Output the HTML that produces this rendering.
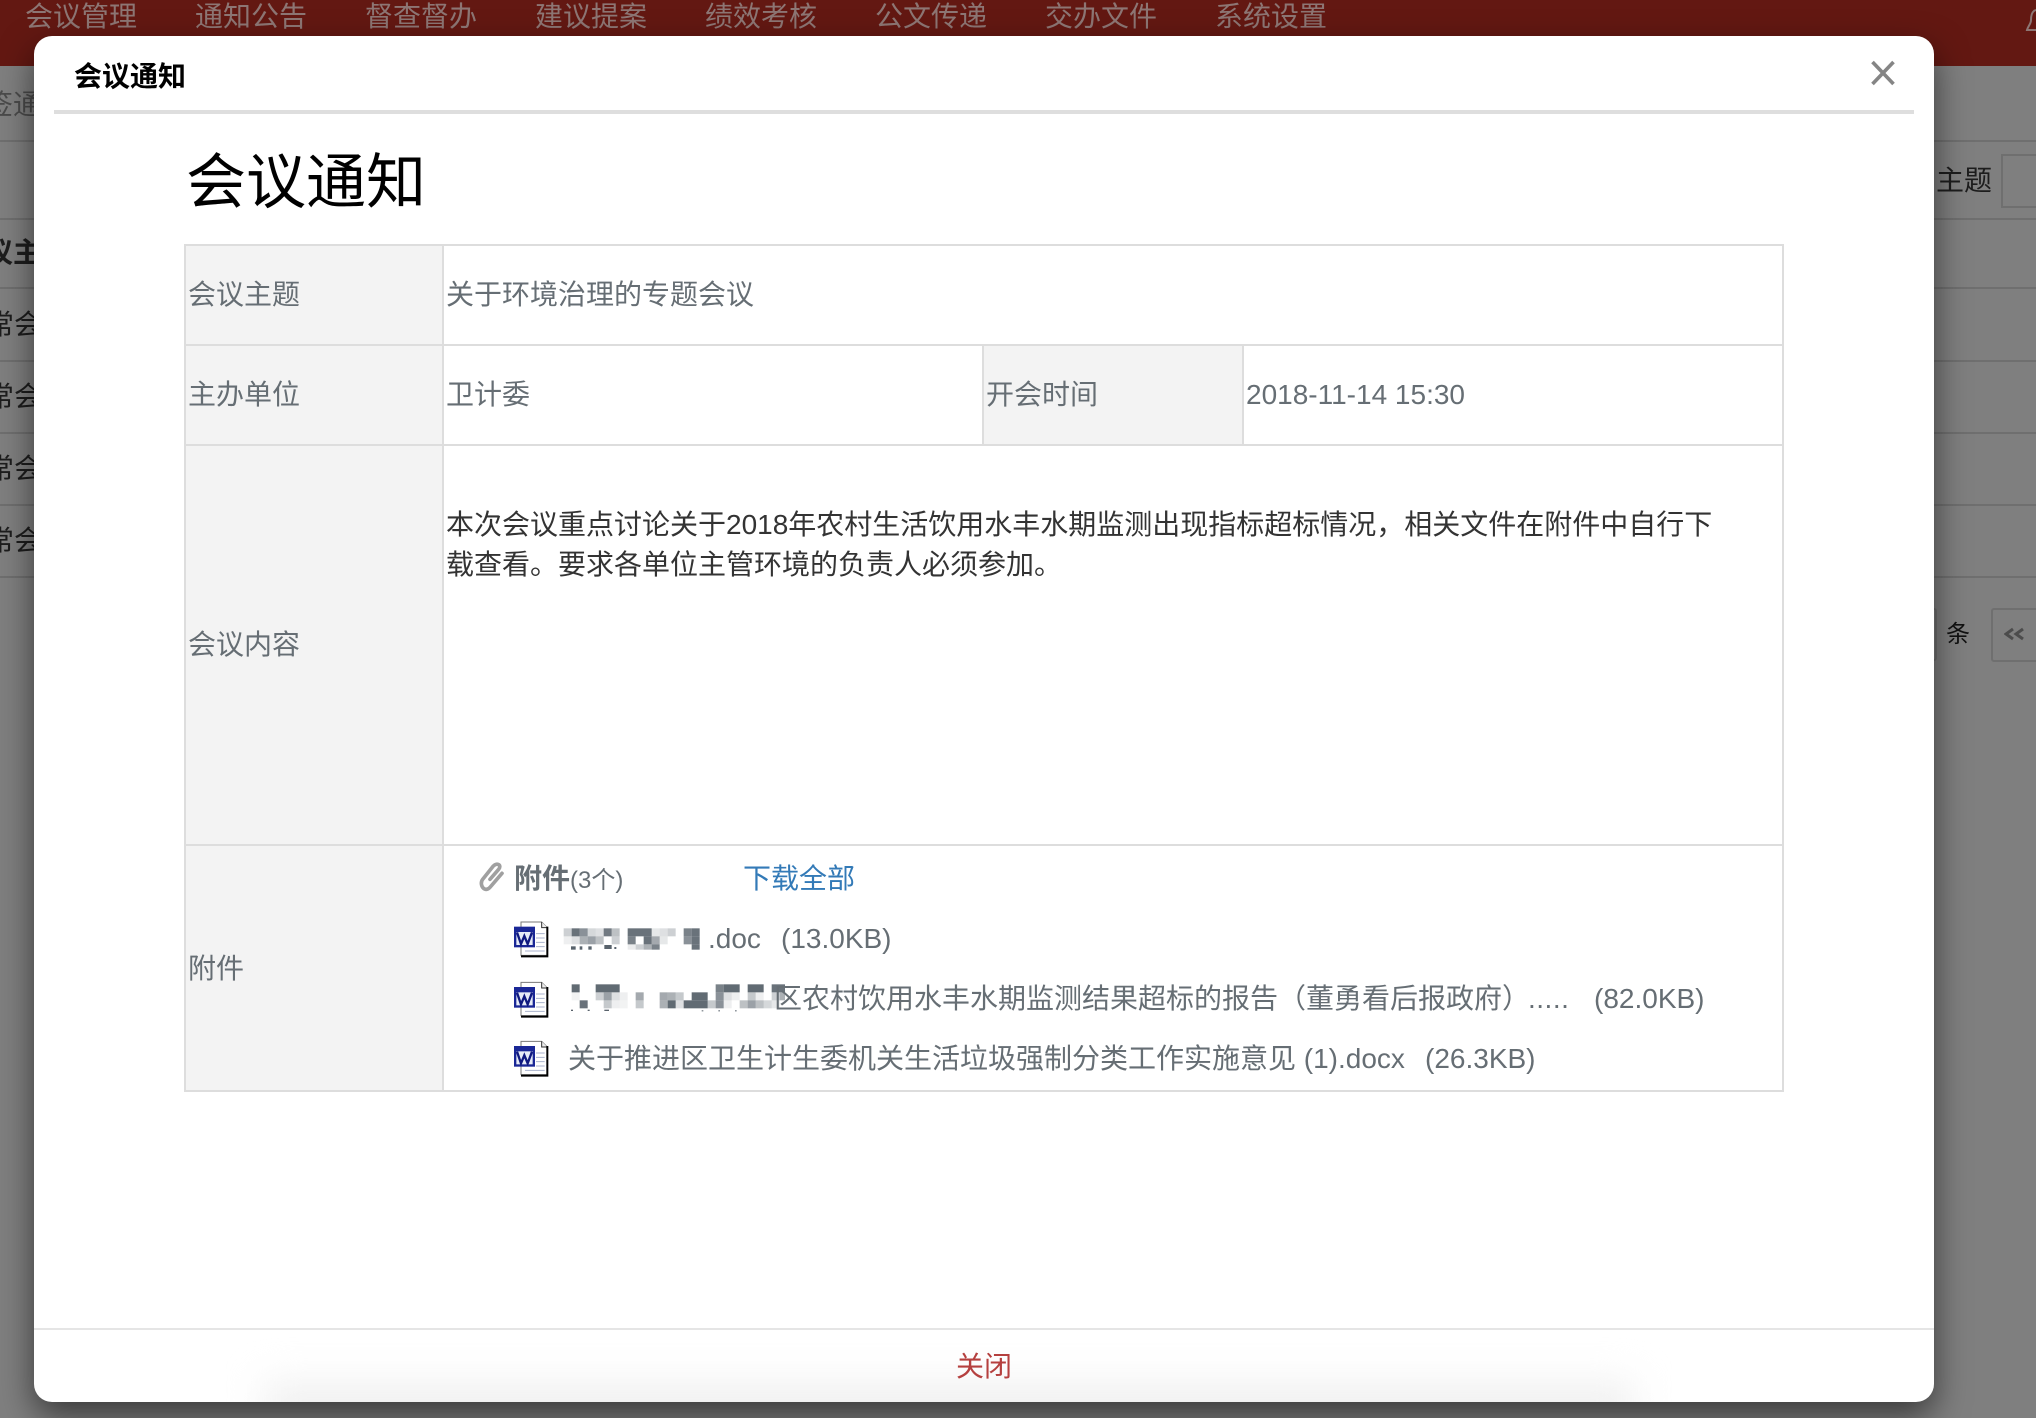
<!DOCTYPE html>
<html lang="zh"><head><meta charset="utf-8"><title>会议通知</title>
<style>
html,body{margin:0;padding:0}
body{width:2036px;height:1418px;position:relative;overflow:hidden;background:#7f7f7f;font-family:"Liberation Sans","Noto Sans CJK SC",sans-serif;font-size:28px;color:#666e74}
.t{position:absolute;white-space:nowrap;line-height:40px;height:40px}
.b{position:absolute}
.nav{position:absolute;left:0;top:0;width:2036px;height:66px;background:#631812}
.nav span{position:absolute;top:-3px;line-height:40px;color:#8d7674;white-space:nowrap}
.ln{position:absolute;height:2px;background:#6f6f6f}
.bg{color:#1d1d1d}
.modal{position:absolute;left:34px;top:36px;width:1900px;height:1366px;background:#fff;border-radius:18px;box-shadow:0 14px 34px rgba(0,0,0,.55);overflow:hidden}
.cell{position:absolute;box-sizing:border-box;border:2px solid #ddd}
.lab{background:#f3f3f3}
.abs{position:absolute}
</style></head><body>
<div class="nav">
<span style="left:25px">会议管理</span><span style="left:195px">通知公告</span><span style="left:365px">督查督办</span><span style="left:535px">建议提案</span><span style="left:705px">绩效考核</span><span style="left:875px">公文传递</span><span style="left:1045px">交办文件</span><span style="left:1215px">系统设置</span>
</div>
<svg class="abs" style="left:2024px;top:6px" width="12" height="28" viewBox="0 0 12 28"><path d="M12 4C8 5 7 9 7 14C7 18 4 20 3 24H12" fill="none" stroke="#8d7674" stroke-width="2"/></svg>

<div class="ln" style="left:0;top:140px;width:2036px"></div>
<div class="ln" style="left:0;top:218px;width:2036px"></div>
<div class="ln" style="left:0;top:287px;width:2036px"></div>
<div class="ln" style="left:0;top:360px;width:2036px"></div>
<div class="ln" style="left:0;top:432px;width:2036px"></div>
<div class="ln" style="left:0;top:504px;width:2036px"></div>
<div class="ln" style="left:0;top:576px;width:2036px"></div>

<div class="t bg" style="left:-15px;top:85px;color:#4b4b4b">签通</div>
<div class="t bg" style="left:-15px;top:233px;font-weight:700">议主</div>
<div class="t bg" style="left:-14px;top:305px">常会</div>
<div class="t bg" style="left:-14px;top:377px">常会</div>
<div class="t bg" style="left:-14px;top:449px">常会</div>
<div class="t bg" style="left:-14px;top:521px">常会</div>
<div class="t bg" style="left:1936px;top:161px">主题</div>
<div class="b" style="left:2001px;top:154px;width:50px;height:50px;border:2px solid #6f6f6f"></div>
<div class="t" style="left:1946px;top:615px;font-size:24px;color:#111">条</div>
<div class="b" style="left:1925px;top:608px;width:10px;height:49px;border:2px solid #6f6f6f;border-left:0;border-radius:3px"></div>
<div class="b" style="left:1991px;top:608px;width:60px;height:50px;border:2px solid #6f6f6f;border-radius:3px"></div>
<svg class="abs" style="left:2004px;top:627px" width="22" height="14" viewBox="0 0 22 14"><path d="M9 2L2 7L9 12M19 2L12 7L19 12" fill="none" stroke="#4c4c4c" stroke-width="3"/></svg>

<div class="modal">
<div class="abs" style="left:230px;top:1345px;width:1370px;height:60px;background:#f1f1f1;filter:blur(18px)"></div>
<div class="abs" style="left:0;top:1292px;width:1900px;height:2px;background:#e5e5e5"></div>
<div class="abs" style="left:20px;top:74px;width:1860px;height:4px;background:#dedede"></div>
</div>

<div class="t" style="left:74px;top:57px;font-weight:700;color:#000">会议通知</div>
<svg class="abs" style="left:1870px;top:59px" width="26" height="28" viewBox="0 0 26 28"><path d="M2.500 3L23.500 25M23.500 3L2.500 25" fill="none" stroke="#858585" stroke-width="3.600"/></svg>
<div class="t" style="left:186px;top:148px;height:70px;line-height:70px;font-size:60px;color:#000">会议通知</div>

<div class="cell lab" style="left:184px;top:244px;width:260px;height:102px"></div>
<div class="cell" style="left:442px;top:244px;width:1342px;height:102px"></div>
<div class="cell lab" style="left:184px;top:344px;width:260px;height:102px"></div>
<div class="cell" style="left:442px;top:344px;width:542px;height:102px"></div>
<div class="cell lab" style="left:982px;top:344px;width:262px;height:102px"></div>
<div class="cell" style="left:1242px;top:344px;width:542px;height:102px"></div>
<div class="cell lab" style="left:184px;top:444px;width:260px;height:402px"></div>
<div class="cell" style="left:442px;top:444px;width:1342px;height:402px"></div>
<div class="cell lab" style="left:184px;top:844px;width:260px;height:248px"></div>
<div class="cell" style="left:442px;top:844px;width:1342px;height:248px"></div>

<div class="t" style="left:188px;top:275px">会议主题</div>
<div class="t" style="left:446px;top:275px">关于环境治理的专题会议</div>
<div class="t" style="left:188px;top:375px">主办单位</div>
<div class="t" style="left:446px;top:375px">卫计委</div>
<div class="t" style="left:986px;top:375px">开会时间</div>
<div class="t" style="left:1246px;top:375px">2018-11-14 15:30</div>
<div class="t" style="left:188px;top:625px">会议内容</div>
<div class="t" style="left:446px;top:505px;color:#333">本次会议重点讨论关于2018年农村生活饮用水丰水期监测出现指标超标情况，相关文件在附件中自行下</div>
<div class="t" style="left:446px;top:545px;color:#333">载查看。要求各单位主管环境的负责人必须参加。</div>
<div class="t" style="left:188px;top:949px">附件</div>

<svg class="abs" style="left:440px;top:840px" width="500" height="260" viewBox="0 0 1500 780">
<path d="M150 118L176 88C186 76 172 66 160 78L128 118C116 134 134 160 150 142L186 100" fill="none" stroke="#a0a0a0" stroke-width="11" stroke-linecap="round" style="filter:blur(.5px)"/>
<defs><g id="w">
<path d="M243 0H305L322 17V100H243Z" fill="#fff" stroke="#777" stroke-width="3"/>
<path d="M305 0V17H322" fill="#eee" stroke="#333" stroke-width="3"/>
<path d="M322 14V103H243" fill="none" stroke="#000" stroke-width="6"/>
<path d="M288 35H314M288 48H314M288 61H314M288 74H314M255 87H314" stroke="#a9b2cc" stroke-width="3"/>
<rect x="222" y="14" width="63" height="62" fill="#1a2796"/>
<rect x="229" y="30" width="49" height="39" fill="#e6ebf7"/>
<path d="M231 31L243 66L253 42L263 66L276 31" fill="none" stroke="#101a80" stroke-width="7"/>
</g></defs>
<use href="#w" y="246"/><use href="#w" y="427"/><use href="#w" y="604"/>
</svg>

<svg class="abs" style="left:555px;top:915px" width="240" height="100" viewBox="0 0 720 300">
<g fill="#59636c">
<rect x="26" y="40" width="24" height="24" opacity=".3"/><rect x="50" y="40" width="24" height="24" opacity=".9"/><rect x="74" y="40" width="24" height="24" opacity=".7"/><rect x="98" y="40" width="24" height="24" opacity=".25"/><rect x="122" y="40" width="24" height="24" opacity=".2"/><rect x="146" y="40" width="24" height="24" opacity=".85"/><rect x="170" y="40" width="24" height="24" opacity=".4"/>
<rect x="218" y="40" width="72" height="24" opacity=".9"/><rect x="290" y="40" width="24" height="24" opacity=".15"/><rect x="314" y="40" width="24" height="24" opacity=".2"/><rect x="338" y="40" width="24" height="24" opacity=".3"/><rect x="386" y="40" width="24" height="24" opacity=".8"/><rect x="410" y="40" width="24" height="24" opacity=".9"/>
<rect x="26" y="64" width="24" height="24" opacity=".1"/><rect x="50" y="64" width="24" height="24" opacity=".2"/><rect x="74" y="64" width="24" height="24" opacity=".5"/><rect x="98" y="64" width="24" height="24" opacity=".6"/><rect x="122" y="64" width="24" height="24" opacity=".4"/><rect x="170" y="64" width="24" height="24" opacity=".3"/>
<rect x="218" y="64" width="24" height="24" opacity=".8"/><rect x="266" y="64" width="24" height="24" opacity=".9"/><rect x="290" y="64" width="24" height="24" opacity=".55"/><rect x="314" y="64" width="24" height="24" opacity=".15"/><rect x="386" y="64" width="24" height="24" opacity=".7"/><rect x="410" y="64" width="24" height="24" opacity=".9"/>
<rect x="218" y="88" width="24" height="16" opacity=".12"/><rect x="242" y="88" width="24" height="16" opacity=".3"/><rect x="266" y="88" width="24" height="16" opacity=".5"/><rect x="290" y="88" width="24" height="16" opacity=".8"/><rect x="410" y="88" width="24" height="16" opacity=".9"/>
<rect x="48" y="94" width="14" height="10"/><rect x="74" y="94" width="8" height="10"/><rect x="100" y="94" width="10" height="10"/><rect x="148" y="90" width="22" height="12"/><rect x="178" y="96" width="6" height="6"/>
<rect x="50" y="208" width="24" height="24" opacity=".95"/><rect x="122" y="208" width="72" height="24" opacity=".95"/><rect x="482" y="208" width="24" height="24" opacity=".8"/><rect x="506" y="208" width="48" height="24" opacity=".95"/><rect x="578" y="208" width="48" height="24" opacity=".95"/><rect x="650" y="208" width="40" height="24" opacity=".9"/>
<rect x="50" y="232" width="24" height="24" opacity=".08"/><rect x="122" y="232" width="24" height="24" opacity=".3"/><rect x="146" y="232" width="24" height="24" opacity=".6"/><rect x="170" y="232" width="24" height="24" opacity=".2"/><rect x="194" y="232" width="24" height="24" opacity=".1"/><rect x="242" y="232" width="24" height="24" opacity=".55"/><rect x="314" y="232" width="24" height="24" opacity=".55"/><rect x="338" y="232" width="24" height="24" opacity=".5"/><rect x="362" y="232" width="24" height="24" opacity=".35"/><rect x="410" y="232" width="48" height="24" opacity=".95"/><rect x="482" y="232" width="24" height="24" opacity=".7"/><rect x="506" y="232" width="24" height="24" opacity=".2"/><rect x="530" y="232" width="24" height="24" opacity=".1"/><rect x="578" y="232" width="24" height="24" opacity=".35"/><rect x="602" y="232" width="24" height="24" opacity=".1"/><rect x="650" y="232" width="24" height="24" opacity=".3"/><rect x="674" y="232" width="16" height="24" opacity=".5"/>
<rect x="74" y="256" width="24" height="24" opacity=".9"/><rect x="146" y="256" width="24" height="24" opacity=".35"/><rect x="170" y="256" width="24" height="24" opacity=".1"/><rect x="194" y="256" width="24" height="24" opacity=".08"/><rect x="242" y="256" width="24" height="24" opacity=".35"/><rect x="314" y="256" width="24" height="24" opacity=".5"/><rect x="338" y="256" width="24" height="24" opacity=".95"/><rect x="362" y="256" width="24" height="24" opacity=".2"/><rect x="386" y="256" width="72" height="24" opacity=".95"/><rect x="458" y="256" width="24" height="24" opacity=".35"/><rect x="482" y="256" width="24" height="24" opacity=".7"/><rect x="506" y="256" width="24" height="24" opacity=".1"/><rect x="554" y="256" width="24" height="24" opacity=".4"/><rect x="578" y="256" width="24" height="24" opacity=".6"/><rect x="602" y="256" width="24" height="24" opacity=".4"/><rect x="626" y="256" width="24" height="24" opacity=".25"/><rect x="650" y="256" width="24" height="24" opacity=".15"/>
<rect x="48" y="284" width="6" height="4"/><rect x="98" y="284" width="6" height="4"/><rect x="148" y="284" width="14" height="4"/><rect x="440" y="286" width="5" height="3"/><rect x="490" y="286" width="5" height="3"/><rect x="540" y="286" width="5" height="3"/>
</g>
</svg>

<div class="t" style="left:514px;top:859px;font-weight:700">附件<span style="font-weight:400;font-size:24px">(3个)</span></div>
<div class="t" style="left:743px;top:859px;color:#337ab7">下载全部</div>
<div class="t" style="left:708px;top:919px">.doc</div>
<div class="t" style="left:781px;top:919px">(13.0KB)</div>
<div class="t" style="left:774px;top:979px">区农村饮用水丰水期监测结果超标的报告（董勇看后报政府）</div>
<div class="t" style="left:1528px;top:979px;letter-spacing:.5px">.....</div>
<div class="t" style="left:1594px;top:979px">(82.0KB)</div>
<div class="t" style="left:568px;top:1039px">关于推进区卫生计生委机关生活垃圾强制分类工作实施意见 (1).docx</div>
<div class="t" style="left:1425px;top:1039px">(26.3KB)</div>
<div class="t" style="left:956px;top:1347px;color:#b5403f">关闭</div>
</body></html>
